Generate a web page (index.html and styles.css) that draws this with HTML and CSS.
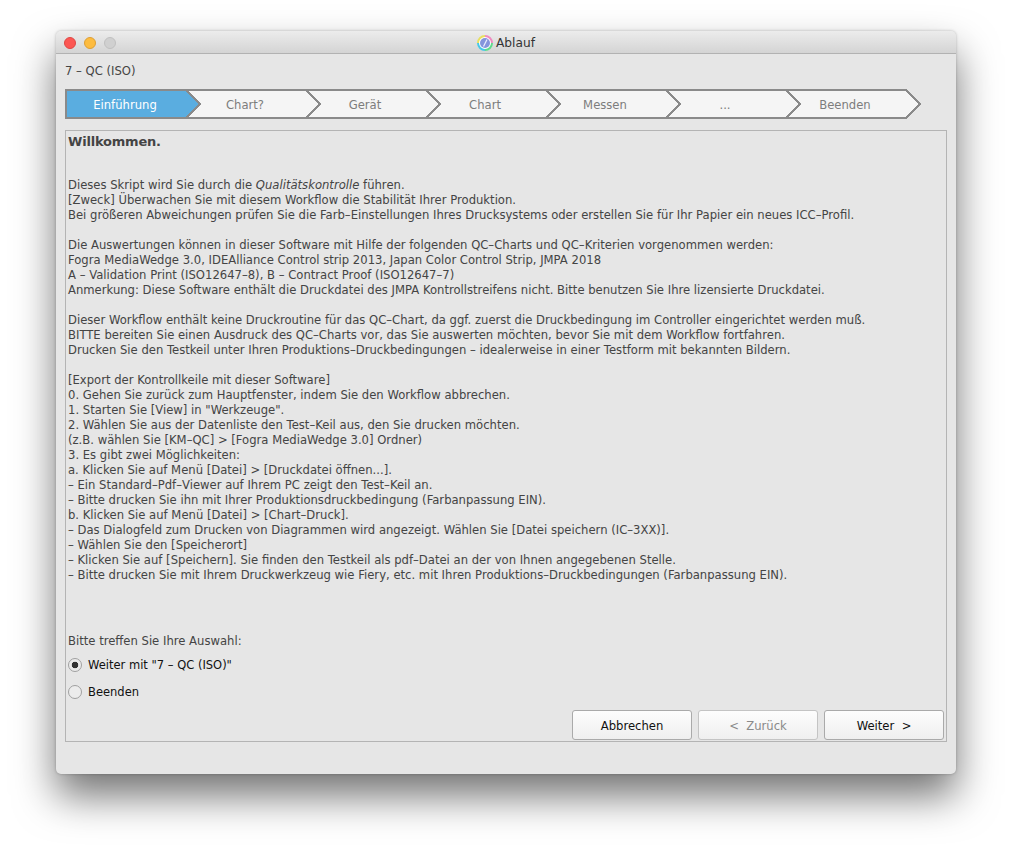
FILE: index.html
```html
<!DOCTYPE html>
<html lang="de">
<head>
  <meta charset="UTF-8">
  <title>Ablauf</title>
  <link rel="stylesheet" href="styles.css">
</head>
<body>
  <div class="window">
    <div class="titlebar">
      <div class="traffic">
        <span class="light red"></span>
        <span class="light yellow"></span>
        <span class="light off"></span>
      </div>
      <div class="title">
        <svg class="app-icon" width="16" height="16" viewBox="0 0 16 16">
          <circle cx="8" cy="8" r="7" fill="#fff"/>
          <path d="M8 1A7 7 0 0 1 15 8" class="arc arc-a"/>
          <path d="M15 8A7 7 0 0 1 8 15" class="arc arc-b"/>
          <path d="M8 15A7 7 0 0 1 1 8" class="arc arc-c"/>
          <path d="M1 8A7 7 0 0 1 8 1" class="arc arc-d"/>
          <circle cx="8" cy="8" r="5" fill="#8494dc"/>
          <path d="M6.5 11.5L10 4.5" class="icon-slash"/>
        </svg>
        Ablauf
      </div>
    </div>
    <div class="content">
      <div class="script-name">7 – QC (ISO)</div>
      <div class="stepper">
        <svg class="stepper-bg" width="857" height="30" viewBox="0 0 857 30">
          <path class="step-shape" d="M1 1H841L855 15L841 29H1Z"/>
          <path class="step-current" d="M1 1H121L135 15L121 29H1Z"/>
          <path class="step-line" d="M1 1H841L855 15L841 29H1ZM121 1L135 15L121 29M241 1L255 15L241 29M361 1L375 15L361 29M481 1L495 15L481 29M601 1L615 15L601 29M721 1L735 15L721 29"/>
        </svg>
        <div class="step active">Einführung</div>
        <div class="step">Chart?</div>
        <div class="step">Gerät</div>
        <div class="step">Chart</div>
        <div class="step">Messen</div>
        <div class="step">...</div>
        <div class="step">Beenden</div>
      </div>
      <div class="panel">
        <h1>Willkommen.</h1>
        <div class="text">
          <p>Dieses Skript wird Sie durch die <em>Qualitätskontrolle</em> führen.<br>
          [Zweck] Überwachen Sie mit diesem Workflow die Stabilität Ihrer Produktion.<br>
          Bei größeren Abweichungen prüfen Sie die Farb–Einstellungen Ihres Drucksystems oder erstellen Sie für Ihr Papier ein neues ICC–Profil.</p>
          <p>Die Auswertungen können in dieser Software mit Hilfe der folgenden QC–Charts und QC–Kriterien vorgenommen werden:<br>
          Fogra MediaWedge 3.0, IDEAlliance Control strip 2013, Japan Color Control Strip, JMPA 2018<br>
          A – Validation Print (ISO12647–8), B – Contract Proof (ISO12647–7)<br>
          Anmerkung: Diese Software enthält die Druckdatei des JMPA Kontrollstreifens nicht. Bitte benutzen Sie Ihre lizensierte Druckdatei.</p>
          <p>Dieser Workflow enthält keine Druckroutine für das QC–Chart, da ggf. zuerst die Druckbedingung im Controller eingerichtet werden muß.<br>
          BITTE bereiten Sie einen Ausdruck des QC–Charts vor, das Sie auswerten möchten, bevor Sie mit dem Workflow fortfahren.<br>
          Drucken Sie den Testkeil unter Ihren Produktions–Druckbedingungen – idealerweise in einer Testform mit bekannten Bildern.</p>
          <p>[Export der Kontrollkeile mit dieser Software]<br>
          0. Gehen Sie zurück zum Hauptfenster, indem Sie den Workflow abbrechen.<br>
          1. Starten Sie [View] in "Werkzeuge".<br>
          2. Wählen Sie aus der Datenliste den Test–Keil aus, den Sie drucken möchten.<br>
          (z.B. wählen Sie [KM–QC] &gt; [Fogra MediaWedge 3.0] Ordner)<br>
          3. Es gibt zwei Möglichkeiten:<br>
          a. Klicken Sie auf Menü [Datei] &gt; [Druckdatei öffnen...].<br>
          – Ein Standard–Pdf–Viewer auf Ihrem PC zeigt den Test–Keil an.<br>
          – Bitte drucken Sie ihn mit Ihrer Produktionsdruckbedingung (Farbanpassung EIN).<br>
          b. Klicken Sie auf Menü [Datei] &gt; [Chart–Druck].<br>
          – Das Dialogfeld zum Drucken von Diagrammen wird angezeigt. Wählen Sie [Datei speichern (IC–3XX)].<br>
          – Wählen Sie den [Speicherort]<br>
          – Klicken Sie auf [Speichern]. Sie finden den Testkeil als pdf–Datei an der von Ihnen angegebenen Stelle.<br>
          – Bitte drucken Sie mit Ihrem Druckwerkzeug wie Fiery, etc. mit Ihren Produktions–Druckbedingungen (Farbanpassung EIN).</p>
        </div>
        <div class="choice-label">Bitte treffen Sie Ihre Auswahl:</div>
        <label class="radio-row"><input type="radio" name="next" checked>Weiter mit "7 – QC (ISO)"</label>
        <label class="radio-row"><input type="radio" name="next">Beenden</label>
        <div class="buttons">
          <button>Abbrechen</button>
          <button disabled>&lt;&nbsp; Zurück</button>
          <button>Weiter &nbsp;&gt;</button>
        </div>
      </div>
    </div>
  </div>
</body>
</html>
```

FILE: styles.css
```css
html, body {
  margin: 0;
  height: 100%;
  overflow: hidden;
  background-color: #fff;
}
body {
  padding: 31px 56px 0;
  box-sizing: border-box;
  font-family: "DejaVu Sans", Verdana, sans-serif;
  font-size: 11.62px;
  color: #444;
}
.window {
  width: 900px;
  height: 743px;
  border-radius: 5px;
  background-color: #e6e6e6;
  box-shadow: 0 22px 40px rgba(0, 0, 0, 0.55), 0 0 3px rgba(0, 0, 0, 0.25);
}
.titlebar {
  position: relative;
  display: flex;
  justify-content: center;
  align-items: center;
  height: 22px;
  border-bottom: 1px solid #b2b2b2;
  border-radius: 5px 5px 0 0;
  background: linear-gradient(#ececec, #d4d4d4);
}
.traffic {
  position: absolute;
  left: 8px;
  top: 6px;
  display: flex;
  gap: 8px;
}
.light {
  width: 12px;
  height: 12px;
  border-radius: 50%;
  box-sizing: border-box;
}
.red { background-color: #fc5753; border: 1px solid #df4744; }
.yellow { background-color: #fdbc40; border: 1px solid #de9f34; }
.off { background-color: #d0d0d0; border: 1px solid #c0c0c0; }
.title {
  display: flex;
  align-items: center;
  gap: 3px;
  padding-top: 2px;
  font-size: 12.2px;
  color: #333;
}
.arc {
  fill: none;
  stroke-width: 2;
}
.arc-a { stroke: #f08ac0; }
.arc-b { stroke: #5fdc8c; }
.arc-c { stroke: #46c8e8; }
.arc-d { stroke: #e8e060; }
.icon-slash {
  fill: none;
  stroke: #e8ecff;
  stroke-width: 1.2;
}
.script-name {
  height: 35px;
  padding-left: 9px;
  line-height: 34px;
}
.stepper {
  position: relative;
  display: flex;
  width: 856px;
  height: 30px;
  margin: 0 0 11px 9px;
}
.stepper-bg {
  position: absolute;
  left: 0;
  top: 0;
}
.step-shape {
  fill: #f5f5f5;
}
.step-current {
  fill: #5aade0;
}
.step-line {
  fill: none;
  stroke: #8a8a8a;
  stroke-width: 2;
  shape-rendering: crispEdges;
}
.step {
  position: relative;
  width: 120px;
  line-height: 32px;
  text-align: center;
  color: #7d7d7d;
}
.step.active {
  color: #fff;
}
.panel {
  box-sizing: border-box;
  width: 882px;
  height: 612px;
  margin-left: 9px;
  padding: 0 2px;
  border: 1px solid #b4b4b4;
}
h1 {
  margin: 0;
  padding-top: 3px;
  height: 47px;
  box-sizing: border-box;
  font-size: 13px;
  line-height: 16px;
  letter-spacing: -0.2px;
  font-weight: bold;
}
.text {
  height: 456px;
  line-height: 15px;
}
.text p {
  margin: 0 0 15px;
}
.choice-label {
  height: 17px;
  line-height: 15px;
}
.radio-row {
  display: flex;
  align-items: center;
  gap: 6px;
  height: 27px;
  font-size: 11.5px;
  color: #111;
}
.radio-row input {
  appearance: none;
  margin: 0;
  width: 14px;
  height: 14px;
  border: 1px solid #a0a0a0;
  border-radius: 50%;
  background: #ececec;
}
.radio-row input:checked {
  background: radial-gradient(circle, #333 0 3px, #ececec 3.6px);
}
.buttons {
  display: flex;
  justify-content: flex-end;
  gap: 6px;
  margin-top: 5px;
}
button {
  width: 120px;
  height: 30px;
  padding: 1px 0 0;
  border: 1px solid #aaa;
  border-radius: 3px;
  background: linear-gradient(#fdfdfd, #efefef);
  font-family: inherit;
  font-size: 11.62px;
  color: #111;
}
button:disabled {
  border-color: #c4c4c4;
  color: #8a8a8a;
}
```
